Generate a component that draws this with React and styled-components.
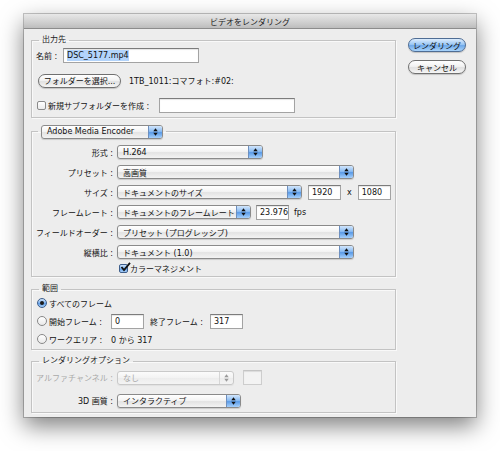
import React from "react";
import styled, { createGlobalStyle } from "styled-components";

const GlobalStyle = createGlobalStyle`
  html, body {
    margin: 0;
    padding: 0;
    background: #ffffff;
  }
  body {
    font-family: "DejaVu Sans", "Noto Sans CJK JP", sans-serif;
    font-size: 8px;
    color: #111;
  }
`;

const Page = styled.div`
  width: 500px;
  height: 451px;
  box-sizing: border-box;
  padding: 14px 0 0 24px;
`;

const Dialog = styled.div`
  width: 452px;
  height: 403px;
  background: #ededed;
  display: flex;
  flex-direction: column;
  box-shadow: 0 0 0 1px rgba(0, 0, 0, 0.22), 0 9px 22px rgba(0, 0, 0, 0.5);
`;

const TitleBar = styled.div`
  flex: none;
  height: 15px;
  box-sizing: border-box;
  border-bottom: 1px solid #8c8c8c;
  background: linear-gradient(#e8e8e8, #cfcfcf 60%, #bdbdbd);
  display: flex;
  align-items: center;
  justify-content: center;
  color: #222;
`;

const Body = styled.div`
  display: flex;
  gap: 12px;
  padding: 5px 10px 0 7px;
`;

const Main = styled.div`
  width: 365px;
  display: flex;
  flex-direction: column;
`;

const Side = styled.div`
  display: flex;
  flex-direction: column;
  gap: 8px;
  margin-top: 4px;
`;

const Group = styled.fieldset`
  margin: ${(p) => p.$mt || 0}px 0 0;
  padding: ${(p) => p.$pt || 0}px 4px ${(p) => p.$pb || 0}px 4px;
  border: 1px solid #c3c3c3;
  box-shadow: inset 1px 1px 0 #f9f9f9, 1px 1px 0 #f9f9f9;
  min-width: 0;
`;

const Legend = styled.legend`
  margin-left: ${(p) => p.$ml ?? 3}px;
  padding: 0 3px;
  height: 12px;
  line-height: 12px;
  color: #222;
`;

const Row = styled.div`
  display: flex;
  align-items: center;
  height: ${(p) => p.$h || 17}px;
  gap: ${(p) => p.$gap || 0}px;
  margin-top: ${(p) => p.$mt || 0}px;
  padding-left: ${(p) => p.$pl || 0}px;
`;

const Text = styled.span`
  flex: none;
  white-space: nowrap;
  width: ${(p) => (p.$w ? `${p.$w}px` : "auto")};
  margin-left: ${(p) => p.$ml || 0}px;
  color: ${(p) => (p.$muted ? "#a9a9a9" : "inherit")};
`;

const Field = styled.div`
  flex: none;
  width: ${(p) => p.$w}px;
  height: ${(p) => p.$h || 15}px;
  box-sizing: border-box;
  border: 1px solid ${(p) => (p.$disabled ? "#cdcdcd" : "#a3a3a3")};
  border-top-color: ${(p) => (p.$disabled ? "#c4c4c4" : "#7c7c7c")};
  background: ${(p) => (p.$disabled ? "#f3f3f3" : "#ffffff")};
  box-shadow: inset 0 1px 1px rgba(0, 0, 0, 0.1);
  padding-left: 3px;
  display: flex;
  align-items: center;
  white-space: nowrap;
`;

const Selected = styled.span`
  background: #b3d4fb;
  padding: 1px 0;
`;

const PillButton = styled.button`
  flex: none;
  width: ${(p) => p.$w || 58}px;
  height: 14px;
  padding: 0;
  border-radius: 7px;
  border: 1px solid ${(p) => (p.$primary ? "#4f6d94" : "#707070")};
  font: inherit;
  color: #111;
  background: ${(p) =>
    p.$primary
      ? "linear-gradient(#dcecfd, #9cc8f5 45%, #6fa9ea 55%, #a9d4fb)"
      : "linear-gradient(#ffffff, #f2f2f2 45%, #e1e1e1 55%, #f6f6f6)"};
  box-shadow: 0 1px 1px rgba(0, 0, 0, 0.18);
  display: flex;
  align-items: center;
  justify-content: center;
`;

const PopupBox = styled.div`
  flex: none;
  width: ${(p) => p.$w}px;
  height: 14px;
  box-sizing: border-box;
  border: 1px solid ${(p) => (p.$disabled ? "#c9c9c9" : "#8a8a8a")};
  border-radius: 3px;
  background: ${(p) =>
    p.$disabled
      ? "linear-gradient(#fbfbfb, #f2f2f2 50%, #ececec 51%, #f4f4f4)"
      : "linear-gradient(#ffffff, #f4f4f4 45%, #e3e3e3 55%, #f3f3f3)"};
  box-shadow: 0 1px 1px rgba(0, 0, 0, ${(p) => (p.$disabled ? 0.05 : 0.15)});
  color: ${(p) => (p.$disabled ? "#a9a9a9" : "#111")};
  display: flex;
  overflow: hidden;
`;

const PopupLabel = styled.span`
  flex: 1;
  min-width: 0;
  padding-left: 5px;
  display: flex;
  align-items: center;
  white-space: nowrap;
`;

const PopupArrows = styled.span`
  flex: none;
  width: 13px;
  border-left: 1px solid ${(p) => (p.$disabled ? "#d6d6d6" : "#6d8fbf")};
  background: ${(p) =>
    p.$disabled
      ? "transparent"
      : "linear-gradient(#d2e6fc, #8bbcf2 45%, #5b9be7 55%, #a6d0fb)"};
  display: flex;
  align-items: center;
  justify-content: center;
`;

const FormGrid = styled.div`
  display: grid;
  grid-template-columns: 77px auto;
  column-gap: 4px;
  row-gap: ${(p) => p.$gap || 6}px;
  grid-auto-rows: ${(p) => p.$rh || 14}px;
  align-items: center;
`;

const FieldName = styled.span`
  justify-self: end;
  white-space: nowrap;
  color: ${(p) => (p.$muted ? "#a9a9a9" : "inherit")};
`;

const Controls = styled.div`
  display: flex;
  align-items: center;
  gap: ${(p) => p.$gap || 0}px;
`;

const BoxMark = styled.span`
  flex: none;
  width: 9px;
  height: 9px;
  box-sizing: border-box;
  border: 1px solid ${(p) => (p.$on ? "#3f5f8c" : "#8a8a8a")};
  border-radius: 2px;
  background: ${(p) =>
    p.$on
      ? "linear-gradient(#cfe4fc, #7fb3ef 50%, #5d9be6 51%, #a7d0fa)"
      : "linear-gradient(#ffffff, #ececec)"};
  position: relative;
  margin-left: ${(p) => p.$ml || 0}px;
`;

const RadioMark = styled.span`
  flex: none;
  width: 10px;
  height: 10px;
  box-sizing: border-box;
  border-radius: 50%;
  border: 1px solid ${(p) => (p.$on ? "#3f5f8c" : "#888")};
  background: ${(p) =>
    p.$on
      ? "linear-gradient(#cfe4fc, #7fb3ef 50%, #5d9be6 51%, #a7d0fa)"
      : "linear-gradient(#ffffff, #e9e9e9)"};
  display: flex;
  align-items: center;
  justify-content: center;
  margin-left: 1px;
  &::after {
    content: "";
    display: ${(p) => (p.$on ? "block" : "none")};
    width: 4px;
    height: 4px;
    border-radius: 50%;
    background: #1b1b1b;
  }
`;

const Check = () => (
  <svg
    width="11"
    height="10"
    viewBox="0 0 11 10"
    style={{ position: "absolute", left: 0, top: -3 }}
  >
    <path d="M1.5 5 L4 8 L10 0.8" fill="none" stroke="#111" strokeWidth="1.8" />
  </svg>
);

const Arrows = ({ color = "#111" }) => (
  <svg width="5" height="8" viewBox="0 0 5 8">
    <path d="M2.5 0.3 L4.7 3.2 H0.3 Z M2.5 7.7 L4.7 4.8 H0.3 Z" fill={color} />
  </svg>
);

function Popup({ w, children, disabled }) {
  return (
    <PopupBox $w={w} $disabled={disabled}>
      <PopupLabel>{children}</PopupLabel>
      <PopupArrows $disabled={disabled}>
        <Arrows color={disabled ? "#9a9a9a" : "#111"} />
      </PopupArrows>
    </PopupBox>
  );
}

export default function App() {
  return (
    <Page>
      <GlobalStyle />
      <Dialog>
        <TitleBar>ビデオをレンダリング</TitleBar>
        <Body>
          <Main>
            <Group $pt={1} $pb={3}>
              <Legend>出力先</Legend>
              <Row>
                <Text $w={27}>名前 :</Text>
                <Field $w={136}>
                  <Selected>DSC_5177.mp4</Selected>
                </Field>
              </Row>
              <Row $mt={8} $gap={8}>
                <PillButton $w={83} style={{ marginLeft: 2 }}>
                  フォルダーを選択...
                </PillButton>
                <Text>1TB_1011:コマフォト:#02:</Text>
              </Row>
              <Row $mt={8} $gap={2}>
                <BoxMark $ml={1} />
                <Text $w={109}>新規サブフォルダーを作成 :</Text>
                <Field $w={136} />
              </Row>
            </Group>

            <Group $mt={7} $pt={8} $pb={2}>
              <Legend $ml={2}>
                <Popup w={122}>Adobe Media Encoder</Popup>
              </Legend>
              <FormGrid>
                <FieldName>形式 :</FieldName>
                <Controls>
                  <Popup w={146}>H.264</Popup>
                </Controls>
                <FieldName>プリセット :</FieldName>
                <Controls>
                  <Popup w={237}>高画質</Popup>
                </Controls>
                <FieldName>サイズ :</FieldName>
                <Controls $gap={6}>
                  <Popup w={185}>ドキュメントのサイズ</Popup>
                  <Field $w={33}>1920</Field>
                  <Text>x</Text>
                  <Field $w={33}>1080</Field>
                </Controls>
                <FieldName>フレームレート :</FieldName>
                <Controls $gap={5}>
                  <Popup w={134}>ドキュメントのフレームレート</Popup>
                  <Field $w={33}>23.976</Field>
                  <Text>fps</Text>
                </Controls>
                <FieldName>フィールドオーダー :</FieldName>
                <Controls>
                  <Popup w={237}>プリセット (プログレッシブ)</Popup>
                </Controls>
                <FieldName>縦横比 :</FieldName>
                <Controls>
                  <Popup w={237}>ドキュメント (1.0)</Popup>
                </Controls>
              </FormGrid>
              <Row $h={12} $mt={3} $pl={83} $gap={2}>
                <BoxMark $on>
                  <Check />
                </BoxMark>
                <Text>カラーマネジメント</Text>
              </Row>
            </Group>

            <Group $mt={6} $pt={1} $pb={3}>
              <Legend>範囲</Legend>
              <Row $h={14} $gap={2}>
                <RadioMark $on />
                <Text>すべてのフレーム</Text>
              </Row>
              <Row $h={14} $mt={4} $gap={2}>
                <RadioMark />
                <Text $w={60}>開始フレーム :</Text>
                <Field $w={33}>0</Field>
                <Text $w={58} $ml={4}>
                  終了フレーム :
                </Text>
                <Field $w={33}>317</Field>
              </Row>
              <Row $h={14} $mt={4} $gap={2}>
                <RadioMark />
                <Text $w={60}>ワークエリア :</Text>
                <Text>0 から 317</Text>
              </Row>
            </Group>

            <Group $mt={5} $pt={3} $pb={4}>
              <Legend>レンダリングオプション</Legend>
              <FormGrid $rh={15} $gap={8}>
                <FieldName $muted>アルファチャンネル :</FieldName>
                <Controls $gap={9}>
                  <Popup w={117} disabled>
                    なし
                  </Popup>
                  <Field $w={19} $disabled />
                </Controls>
                <FieldName>3D 画質 :</FieldName>
                <Controls>
                  <Popup w={124}>インタラクティブ</Popup>
                </Controls>
              </FormGrid>
            </Group>
          </Main>

          <Side>
            <PillButton $primary>レンダリング</PillButton>
            <PillButton>キャンセル</PillButton>
          </Side>
        </Body>
      </Dialog>
    </Page>
  );
}
